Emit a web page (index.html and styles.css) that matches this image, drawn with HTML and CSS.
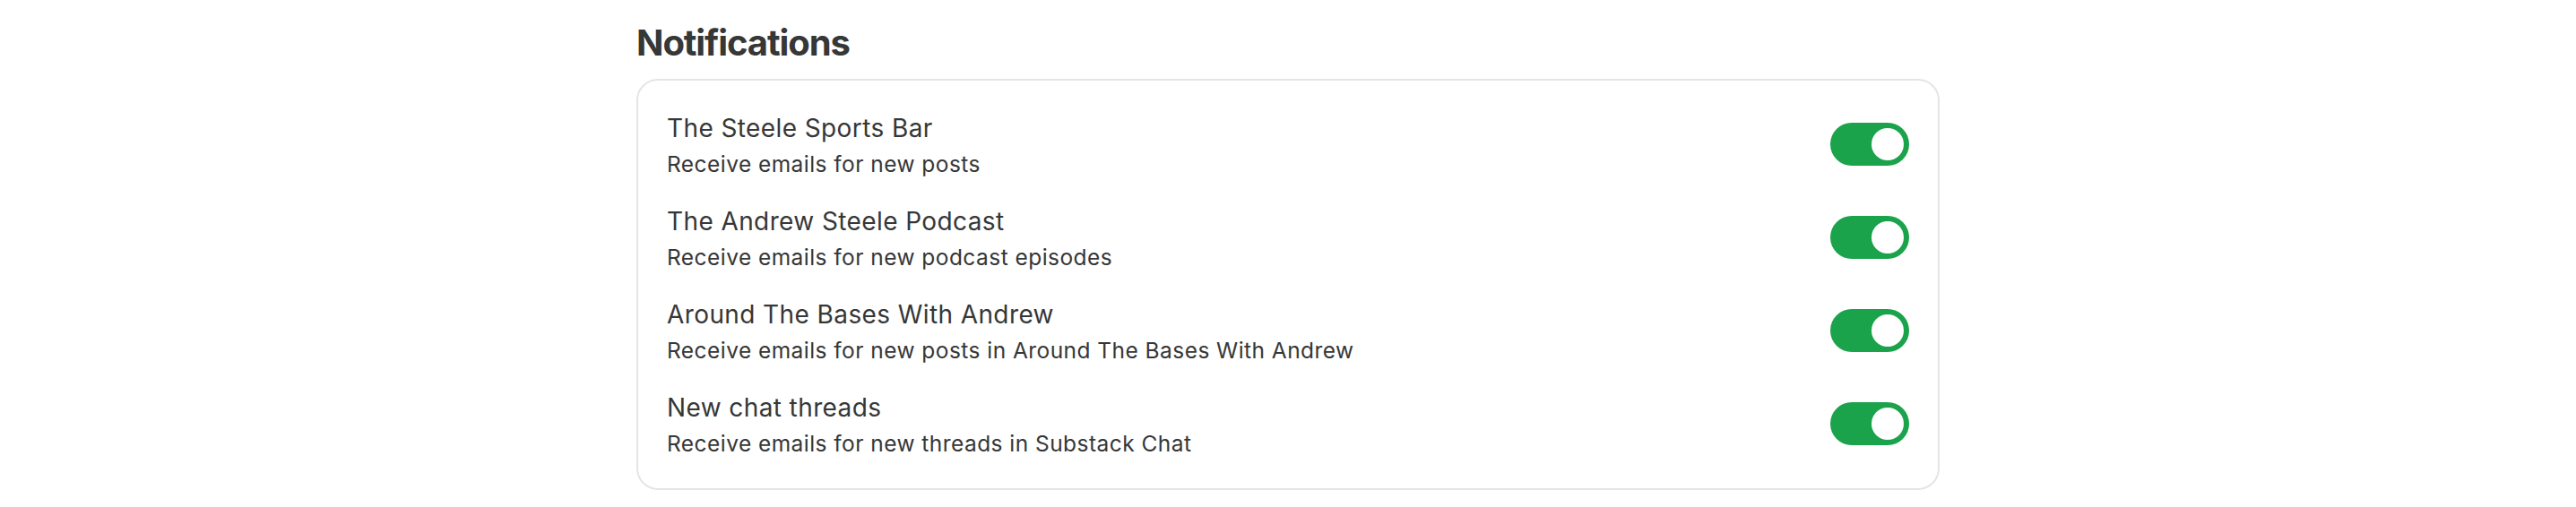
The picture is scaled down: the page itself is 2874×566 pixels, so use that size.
FILE: index.html
```html
<!DOCTYPE html>
<html lang="en">
<head>
<meta charset="utf-8">
<title>Notifications</title>
<link rel="stylesheet" href="styles.css">
</head>
<body>
<main class="section">
  <h2 class="section-title">Notifications</h2>
  <div class="card">
    <div class="row">
      <div class="text">
        <div class="title">The Steele Sports Bar</div>
        <div class="desc">Receive emails for new posts</div>
      </div>
      <span class="toggle on"><span class="knob"></span></span>
    </div>
    <div class="row">
      <div class="text">
        <div class="title">The Andrew Steele Podcast</div>
        <div class="desc">Receive emails for new podcast episodes</div>
      </div>
      <span class="toggle on"><span class="knob"></span></span>
    </div>
    <div class="row">
      <div class="text">
        <div class="title">Around The Bases With Andrew</div>
        <div class="desc">Receive emails for new posts in Around The Bases With Andrew</div>
      </div>
      <span class="toggle on"><span class="knob"></span></span>
    </div>
    <div class="row">
      <div class="text">
        <div class="title">New chat threads</div>
        <div class="desc">Receive emails for new threads in Substack Chat</div>
      </div>
      <span class="toggle on"><span class="knob"></span></span>
    </div>
  </div>
</main>
</body>
</html>
```
FILE: styles.css
```css
html, body {
  margin: 0;
  padding: 0;
  background: #ffffff;
}
body {
  font-family: Inter, "Noto Sans", "Liberation Sans", sans-serif;
  color: #363737;
  padding-top: 24px;
}
.section {
  width: 1454px;
  margin: 0 auto;
}
.section-title {
  margin: 0 0 16px 0;
  font-size: 40px;
  line-height: 48px;
  font-weight: 700;
  letter-spacing: -1.1px;
  color: #363737;
}
.card {
  border: 2px solid #e5e5e5;
  border-radius: 24px;
  padding: 31px 32px 32px 32px;
  display: flex;
  flex-direction: column;
  gap: 24px;
}
.row {
  display: flex;
  align-items: center;
  justify-content: space-between;
  height: 80px;
}
.text {
  display: flex;
  flex-direction: column;
}
.title {
  font-size: 28px;
  line-height: 44px;
  font-weight: 400;
  letter-spacing: 0.4px;
}
.desc {
  font-size: 24.5px;
  line-height: 36px;
  font-weight: 400;
  letter-spacing: 0.45px;
}
.toggle {
  width: 88px;
  height: 48px;
  border-radius: 24px;
  background: #1ba34b;
  display: flex;
  align-items: center;
  justify-content: flex-end;
  padding: 0 6px;
  box-sizing: border-box;
  flex-shrink: 0;
}
.knob {
  width: 36px;
  height: 36px;
  border-radius: 50%;
  background: #ffffff;
}
```
